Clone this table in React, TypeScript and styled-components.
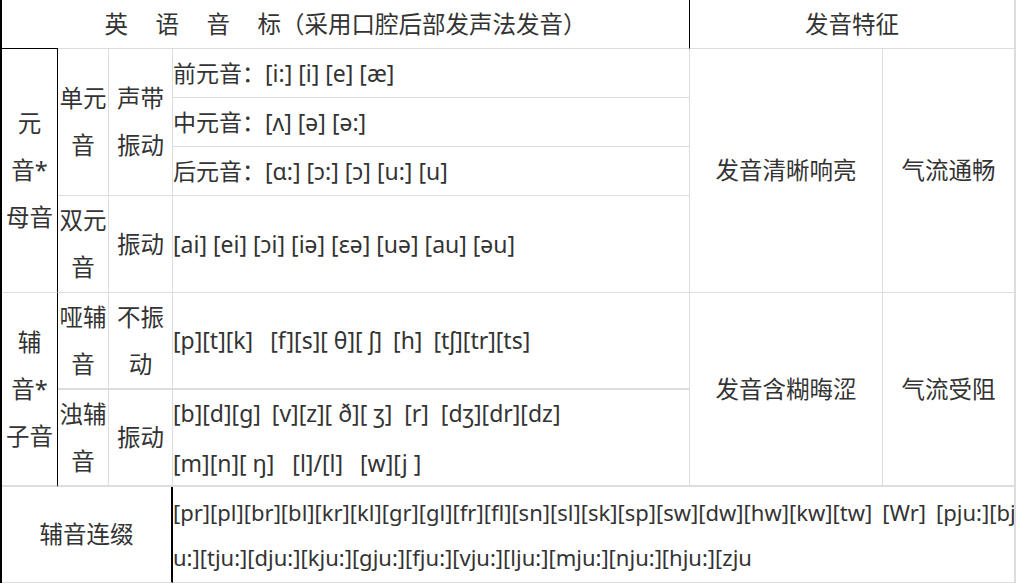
import React from 'react';
import styled, { createGlobalStyle } from 'styled-components';

const Global = createGlobalStyle`
  html, body { margin: 0; padding: 0; background: #fff; }
  body {
    font-family: "Noto Sans", "Noto Sans CJK SC", sans-serif;
    color: #333;
  }
`;

const GRID = '#dddddd';

const Table = styled.div`
  display: grid;
  grid-template-columns: 56px 51px 64px 517px 193px 133px;
  grid-template-rows: 49px 49px 49px 49px 97px 97px 97px 96px;
  width: 1016px;
  height: 583px;
  box-sizing: border-box;
  border-left: 2px solid #000;
  font-size: 23.5px;
`;

type CellProps = {
  $col: string;
  $row: string;
  $rb?: string;
  $bb?: string;
  $lh?: number;
  $size?: number;
  $topBlack?: boolean;
};

const Cell = styled.div<CellProps>`
  grid-column: ${(p) => p.$col};
  grid-row: ${(p) => p.$row};
  display: flex;
  align-items: center;
  justify-content: center;
  text-align: center;
  box-sizing: border-box;
  min-width: 0;
  overflow: hidden;
  white-space: pre;
  line-height: ${(p) => p.$lh ?? 47}px;
  border-right: ${(p) => p.$rb ?? `1px solid ${GRID}`};
  border-bottom: ${(p) => p.$bb ?? `1px solid ${GRID}`};
  ${(p) => (p.$topBlack ? 'margin-top: -1px; border-top: 1px solid #000;' : '')}
`;

const SoundCell = styled(Cell)`
  justify-content: flex-start;
  text-align: left;
  font-size: ${(p) => p.$size ?? 23}px;
`;

const Spread = styled.span`
  letter-spacing: 27.5px;
`;

const Gap = styled.span<{ $w: number }>`
  display: inline-block;
  width: ${(p) => p.$w}px;
`;

const THICK = `2px solid ${GRID}`;
const BLACK1 = '1px solid #000';
const BLACK2 = '2px solid #000';

export default function App() {
  return (
    <>
      <Global />
      <Table>
        <Cell $col="1 / 5" $row="1 / 2" $rb={BLACK1}>
          <Spread>英语音</Spread>标（采用口腔后部发声法发音）
        </Cell>
        <Cell $col="5 / 7" $row="1 / 2" $rb={THICK}>
          发音特征
        </Cell>

        <Cell $col="1 / 2" $row="2 / 6" $rb={BLACK1} $topBlack>
          {'元\n音*\n母音'}
        </Cell>
        <Cell $col="2 / 3" $row="2 / 5">{'单元\n音'}</Cell>
        <Cell $col="3 / 4" $row="2 / 5">{'声带\n振动'}</Cell>
        <SoundCell $col="4 / 5" $row="2 / 3">前元音：[i:] [i] [e] [æ]</SoundCell>
        <SoundCell $col="4 / 5" $row="3 / 4">中元音：[ʌ] [ə] [ə:]</SoundCell>
        <SoundCell $col="4 / 5" $row="4 / 5">后元音：[ɑ:] [ɔ:] [ɔ] [u:] [u]</SoundCell>
        <Cell $col="2 / 3" $row="5 / 6">{'双元\n音'}</Cell>
        <Cell $col="3 / 4" $row="5 / 6">振动</Cell>
        <SoundCell $col="4 / 5" $row="5 / 6">[ai] [ei] [ɔi] [iə] [ɛə] [uə] [au] [əu]</SoundCell>

        <Cell $col="5 / 6" $row="2 / 6">发音清晰响亮</Cell>
        <Cell $col="6 / 7" $row="2 / 6" $rb={THICK}>气流通畅</Cell>

        <Cell $col="1 / 2" $row="6 / 8" $rb={BLACK1} $bb={THICK}>
          {'辅\n音*\n子音'}
        </Cell>
        <Cell $col="2 / 3" $row="6 / 7" $bb={THICK}>{'哑辅\n音'}</Cell>
        <Cell $col="3 / 4" $row="6 / 7" $bb={THICK}>{'不振\n动'}</Cell>
        <SoundCell $col="4 / 5" $row="6 / 7" $bb={THICK}>
          [p][t][k]<Gap $w={17} />[f][s][ θ][ ʃ]<Gap $w={11} />[h]<Gap $w={11} />[tʃ][tr][ts]
        </SoundCell>
        <Cell $col="2 / 3" $row="7 / 8" $bb={THICK}>{'浊辅\n音'}</Cell>
        <Cell $col="3 / 4" $row="7 / 8" $bb={THICK}>振动</Cell>
        <SoundCell $col="4 / 5" $row="7 / 8" $bb={THICK} $lh={50}>
          <span>
            [b][d][g]<Gap $w={11} />[v][z][ ð][ ʒ]<Gap $w={12} />[r]<Gap $w={12} />[dʒ][dr][dz]
            <br />
            [m][n][ ŋ]<Gap $w={18} />[l]/[l]<Gap $w={17} />[w][j ]
          </span>
        </SoundCell>

        <Cell $col="5 / 6" $row="6 / 8" $bb={THICK}>发音含糊晦涩</Cell>
        <Cell $col="6 / 7" $row="6 / 8" $rb={THICK} $bb={THICK}>气流受阻</Cell>

        <Cell $col="1 / 4" $row="8 / 9" $rb={BLACK2}>辅音连缀</Cell>
        <SoundCell $col="4 / 7" $row="8 / 9" $rb={THICK} $lh={45} $size={22}>
          <span>
            [pr][pl][br][bl][kr][kl][gr][gl][fr][fl][sn][sl][sk][sp][sw][dw][hw][kw][tw]<Gap $w={10} />[Wr]<Gap $w={10} />[pju:][bj
            <br />
            u:][tju:][dju:][kju:][gju:][fju:][vju:][lju:][mju:][nju:][hju:][zju
          </span>
        </SoundCell>
      </Table>
    </>
  );
}
